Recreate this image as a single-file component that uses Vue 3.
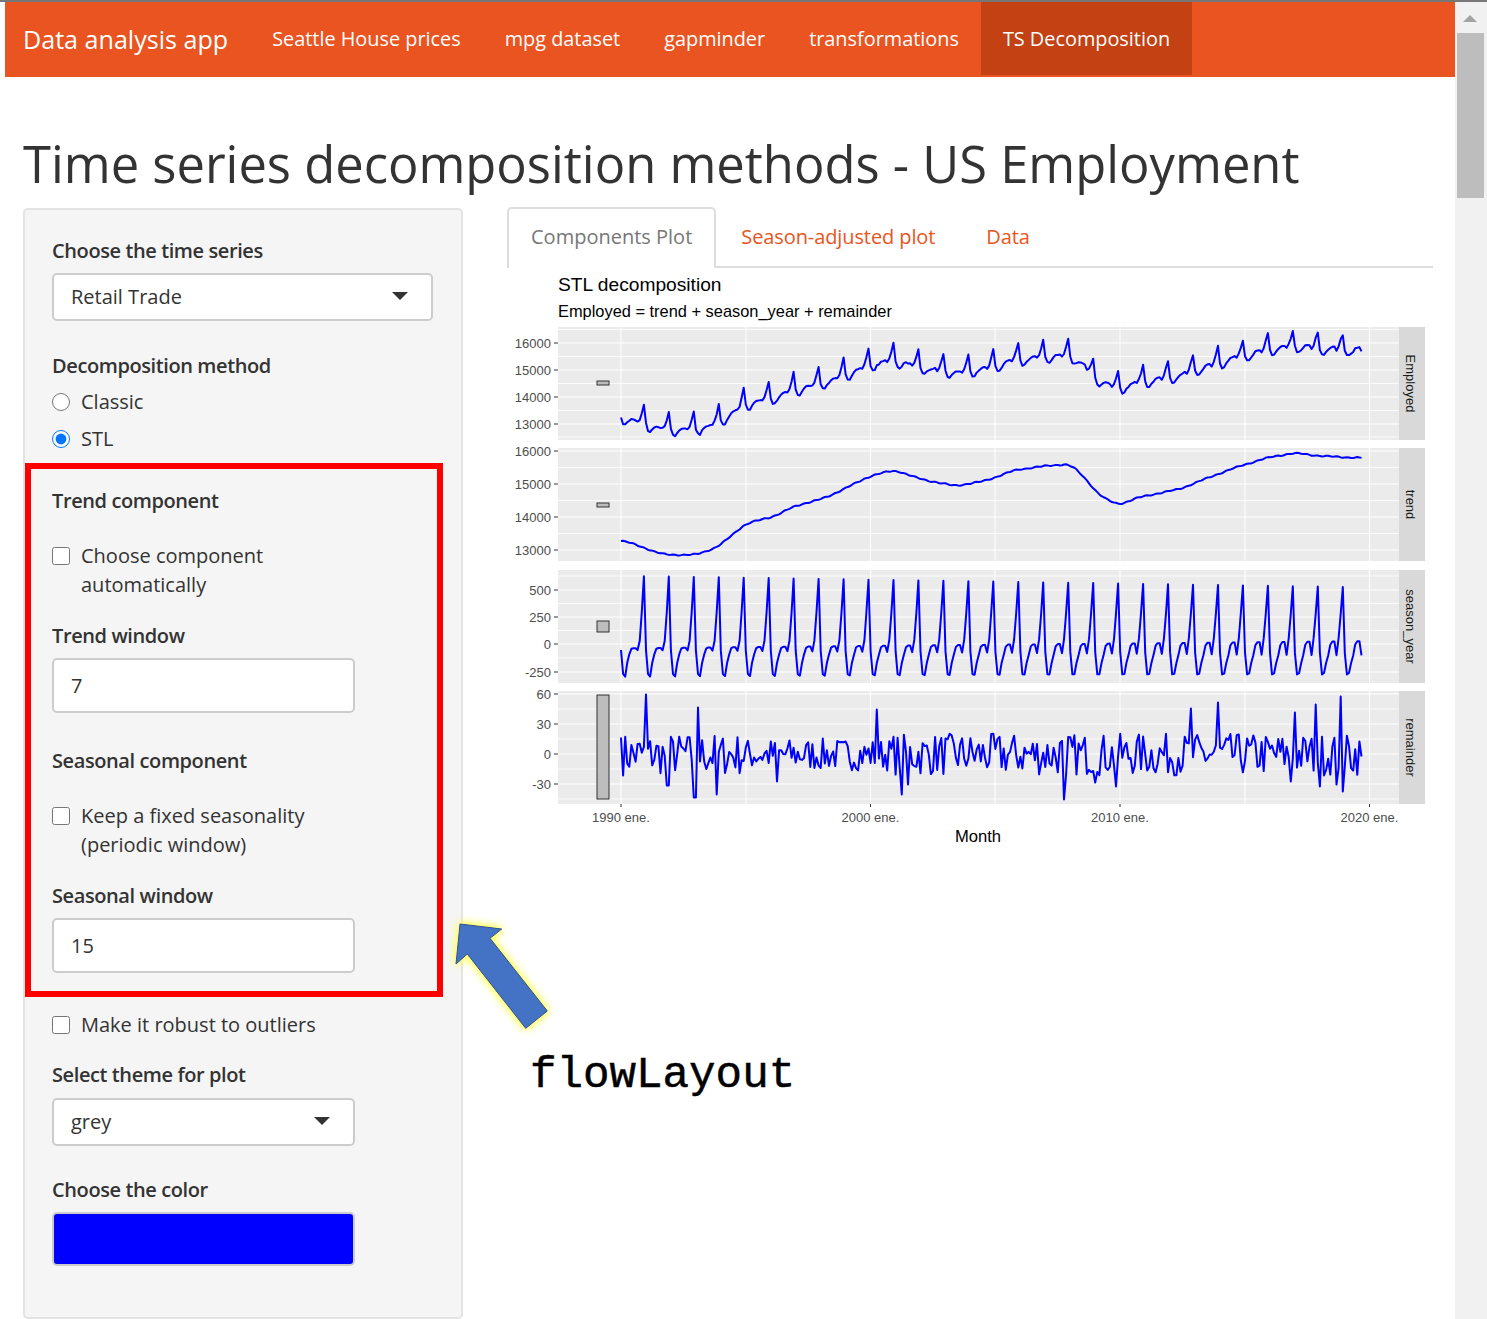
<script setup>
const navLinks = ['Seattle House prices', 'mpg dataset', 'gapminder', 'transformations', 'TS Decomposition']

// x position of a month index (0 = January 1990)
const monthX = (i) => 621 + i * 2.08

const trendKnots = [
  [621, 540], [640, 546], [660, 554], [680, 555], [695, 555], [718, 547], [745, 524], [775, 516],
  [795, 506], [825, 498], [850, 486], [870, 476], [895, 470], [920, 479], [955, 486], [985, 481],
  [1015, 470], [1045, 466], [1070, 464], [1085, 478], [1100, 496], [1118, 505], [1140, 497],
  [1180, 489], [1210, 477], [1240, 466], [1270, 457], [1295, 453], [1320, 456], [1361, 458]
]
function trendAt(x) {
  for (let k = 1; k < trendKnots.length; k++) {
    if (x <= trendKnots[k][0]) {
      const [x0, y0] = trendKnots[k - 1]
      const [x1, y1] = trendKnots[k]
      const y = y0 + ((y1 - y0) * (x - x0)) / (x1 - x0)
      return 13000 + (550 - y) / 0.033
    }
  }
  return 13000 + (550 - 458) / 0.033
}

const earlyYear = [-50, -270, -295, -170, -90, -40, -35, -35, -50, 30, 300, 630]
const lateYear = [-80, -275, -260, -170, -100, 0, 30, 30, -100, 60, 280, 525]

const spikes = {
  0: 17, 12: 60, 22: -31, 23: -31, 35: -43, 36: -43, 37: 47, 46: -40, 75: -27, 123: 45, 135: -40, 138: -30,
  213: -45, 214: -20, 228: -28, 238: -32, 274: 46, 287: 52, 322: -27, 324: 42, 334: 50, 336: -32, 344: -30,
  346: 58, 347: -37, 356: -2
}
let seed = 7
function rnd() {
  seed = (seed * 16807) % 2147483647
  return seed / 2147483647
}

const months = Array.from({ length: 357 }, (_, i) => i)
const rawTrend = months.map((i) => trendAt(monthX(i)))
const trend = months.map((i) => {
  const from = Math.max(0, i - 3)
  const to = Math.min(356, i + 3)
  let sum = 0
  for (let j = from; j <= to; j++) sum += rawTrend[j]
  return sum / (to - from + 1) + 14 * Math.sin(i * 1.3) + 10 * Math.sin(i * 0.41)
})
const season = months.map((i) => {
  const t = i / 356
  return earlyYear[i % 12] * (1 - t) + lateYear[i % 12] * t
})
const remainder = months.map((i) => {
  if (spikes[i] !== undefined) return spikes[i]
  const amp = i > 60 && i < 130 ? 16 : 21
  return (rnd() * 2 - 1) * amp
})
const employed = months.map((i) => trend[i] + season[i] + remainder[i])

const linePath = (values, toY) =>
  values.map((v, i) => `${i ? 'L' : 'M'}${monthX(i).toFixed(1)} ${toY(v).toFixed(1)}`).join('')

const panels = [
  {
    name: 'Employed', top: 327, bottom: 440, barTop: 381, barHeight: 4,
    majors: [[343, '16000'], [370, '15000'], [397, '14000'], [424, '13000']],
    minors: [329.5, 356.5, 383.5, 410.5, 437],
    path: linePath(employed, (v) => 424 - (v - 13000) * 0.027)
  },
  {
    name: 'trend', top: 448, bottom: 561, barTop: 503, barHeight: 4,
    majors: [[451, '16000'], [484, '15000'], [517, '14000'], [550, '13000']],
    minors: [467.5, 500.5, 533.5],
    path: linePath(trend, (v) => 550 - (v - 13000) * 0.033)
  },
  {
    name: 'season_year', top: 570, bottom: 683, barTop: 621, barHeight: 11,
    majors: [[590, '500'], [617, '250'], [644, '0'], [672, '-250']],
    minors: [576, 603.5, 630.5, 658],
    path: linePath(season, (v) => 644.5 - v * 0.109)
  },
  {
    name: 'remainder', top: 691, bottom: 804, barTop: 695, barHeight: 104,
    majors: [[694, '60'], [724, '30'], [754, '0'], [784, '-30']],
    minors: [709, 739, 769, 799],
    path: linePath(remainder, (v) => 754.5 - v)
  }
]
const gridX = [621, 746, 870.5, 995, 1120, 1245, 1369.5]
const yearTicks = [[621, '1990 ene.'], [870.5, '2000 ene.'], [1120, '2010 ene.'], [1369.5, '2020 ene.']]
</script>

<template>
  <div class="window">
    <div class="topline"></div>
    <div class="body-row">
      <div class="page">
        <nav class="navbar">
          <span class="brand">Data analysis app</span>
          <a
            v-for="(link, i) in navLinks"
            :key="link"
            class="nav-link"
            :class="{ active: i === navLinks.length - 1 }"
          >{{ link }}</a>
        </nav>

        <h1 class="title">Time series decomposition methods - US Employment</h1>

        <div class="columns">
          <aside class="sidebar">
            <label class="label first">Choose the time series</label>
            <div class="select wide"><span>Retail Trade</span><i class="caret"></i></div>

            <label class="label decomposition">Decomposition method</label>
            <label class="option classic"><input type="radio" name="method" /><span>Classic</span></label>
            <label class="option stl"><input type="radio" name="method" checked /><span>STL</span></label>

            <label class="label trend-head">Trend component</label>
            <label class="option check"><input type="checkbox" /><span>Choose component<br />automatically</span></label>
            <label class="label window-label">Trend window</label>
            <input class="number" type="text" value="7" readonly />

            <label class="label season-head">Seasonal component</label>
            <label class="option check"><input type="checkbox" /><span>Keep a fixed seasonality<br />(periodic window)</span></label>
            <label class="label window-label">Seasonal window</label>
            <input class="number" type="text" value="15" readonly />

            <label class="option robust"><input type="checkbox" /><span>Make it robust to outliers</span></label>

            <label class="label theme">Select theme for plot</label>
            <div class="select"><span>grey</span><i class="caret"></i></div>

            <label class="label color">Choose the color</label>
            <div class="swatch"></div>
          </aside>

          <main class="content">
            <div class="tabs">
              <a class="tab active">Components Plot</a>
              <a class="tab">Season-adjusted plot</a>
              <a class="tab">Data</a>
            </div>
            <svg class="plot" viewBox="507 268 926 590" width="926" height="590">
              <text x="558" y="291" class="plot-title">STL decomposition</text>
              <text x="558" y="317" class="plot-sub">Employed = trend + season_year + remainder</text>
              <g v-for="p in panels" :key="p.name">
                <rect x="558" :y="p.top" width="841" :height="p.bottom - p.top" fill="#ebebeb" />
                <rect x="1399" :y="p.top" width="26" :height="p.bottom - p.top" fill="#d9d9d9" />
                <line v-for="y in p.minors" :key="y" x1="558" x2="1399" :y1="y" :y2="y" stroke="#fff" stroke-width="0.8" />
                <line v-for="t in p.majors" :key="t[1]" x1="558" x2="1399" :y1="t[0]" :y2="t[0]" stroke="#fff" stroke-width="1.2" />
                <line v-for="x in gridX" :key="x" :x1="x" :x2="x" :y1="p.top" :y2="p.bottom" stroke="#fff" stroke-width="1" />
                <rect x="597" :y="p.barTop" width="12" :height="p.barHeight" fill="#bdbdbd" stroke="#333" stroke-width="1" />
                <path :d="p.path" fill="none" stroke="#0000ff" stroke-width="2" stroke-linejoin="round" />
                <g v-for="t in p.majors" :key="t[1]">
                  <line x1="554" x2="558" :y1="t[0]" :y2="t[0]" stroke="#333" />
                  <text x="551" :y="t[0] + 4.5" class="axis" text-anchor="end">{{ t[1] }}</text>
                </g>
                <text
                  class="strip"
                  text-anchor="middle"
                  :transform="`translate(1406 ${(p.top + p.bottom) / 2}) rotate(90)`"
                >{{ p.name }}</text>
              </g>
              <g v-for="t in yearTicks" :key="t[1]">
                <line :x1="t[0]" :x2="t[0]" y1="804" y2="807" stroke="#333" />
                <text :x="t[0]" y="822" class="axis" text-anchor="middle">{{ t[1] }}</text>
              </g>
              <text x="978" y="842" class="plot-month" text-anchor="middle">Month</text>
            </svg>
          </main>
        </div>
      </div>

      <div class="scrollbar">
        <i class="scroll-arrow"></i>
        <div class="scroll-thumb"></div>
      </div>
    </div>

    <!-- annotation layer drawn on top of the screenshot -->
    <div class="red-box"></div>
    <svg class="arrow" width="110" height="120" viewBox="445 915 110 120">
      <polygon
        points="460,924 501.7,929 490,938.3 547.3,1011 525.7,1028.3 467.3,954 456,964"
        fill="#4472c4"
        stroke="#2f528f"
        stroke-width="1"
      />
    </svg>
    <div class="flow-label">flowLayout</div>
  </div>
</template>

<style>
html, body { margin: 0; background: #fff; }
</style>

<style scoped>
.window {
  position: relative;
  width: 1487px;
  height: 1319px;
  overflow: hidden;
  background: #fff;
  font-family: "Open Sans", "Noto Sans", sans-serif;
  color: #333;
}
.topline { height: 2px; background: #777; }
.body-row { display: flex; height: 1317px; padding-left: 5px; }
.page { width: 1450px; flex: none; }

.navbar {
  display: flex;
  align-items: stretch;
  height: 73px;
  background: #e95420;
  border-bottom: 2px solid #e95420;
  box-sizing: content-box;
  color: #fff;
}
.brand {
  font-size: 25.1px;
  line-height: 74px;
  margin-left: 18px;
  margin-right: 22px;
  white-space: nowrap;
}
.nav-link {
  padding: 0 22px;
  font-size: 19.87px;
  line-height: 74px;
  white-space: nowrap;
}
.nav-link.active { background: #c34113; }

.title {
  margin: 57px 0 14px 18px;
  font-size: 50.7px;
  line-height: 60px;
  font-weight: 400;
  white-space: nowrap;
}

.columns { display: flex; align-items: flex-start; padding-left: 18px; }

.sidebar {
  box-sizing: border-box;
  width: 440px;
  height: 1111px;
  flex: none;
  background: #f5f5f5;
  border: 2px solid #e3e3e3;
  border-radius: 5px;
  padding: 27px 27px 0;
  display: flex;
  flex-direction: column;
  align-items: flex-start;
  font-size: 20px;
  line-height: 29px;
}
.label { display: block; font-weight: 600; letter-spacing: -0.4px; white-space: nowrap; height: 29px; line-height: 27px; }
.first { margin-bottom: 7px; }
.decomposition { margin-top: 31px; margin-bottom: 7px; }
.trend-head { margin-top: 33px; margin-bottom: 26px; }
.window-label { margin-top: 22px; margin-bottom: 7px; }
.season-head { margin-top: 34px; margin-bottom: 26px; }
.theme { margin-top: 21px; margin-bottom: 8px; }
.color { margin-top: 30px; margin-bottom: 7px; }

.option { display: flex; align-items: flex-start; white-space: nowrap; }
.option input { width: 18px; height: 18px; margin: 5px 11px 0 0; flex: none; }
.option span { margin: -1px 0 1px; }
.stl { margin-top: 8px; }
.robust { margin-top: 38px; }

.select {
  box-sizing: border-box;
  position: relative;
  width: 303px;
  height: 48px;
  background: #fff;
  border: 2px solid #ccc;
  border-radius: 5px;
  padding-left: 17px;
  line-height: 44px;
}
.select.wide { width: 381px; }
.caret {
  position: absolute;
  right: 23px;
  top: 17px;
  border-left: 8px solid transparent;
  border-right: 8px solid transparent;
  border-top: 8px solid #333;
}
.number {
  box-sizing: border-box;
  width: 303px;
  height: 55px;
  background: #fff;
  border: 2px solid #ccc;
  border-radius: 5px;
  padding: 0 17px;
  font: inherit;
  color: #333;
  outline: none;
}
.swatch {
  box-sizing: border-box;
  width: 303px;
  height: 54px;
  background: #0000ff;
  border: 2px solid #ccc;
  border-radius: 5px;
}

.content { margin-left: 44px; width: 926px; flex: none; margin-top: -1px; }
.tabs {
  display: flex;
  height: 59px;
  border-bottom: 2px solid #ddd;
  font-size: 20px;
  color: #e95420;
}
.tab { padding: 0 22px 0 24px; line-height: 60px; white-space: nowrap; margin-right: 5px; letter-spacing: -0.1px; }
.tab.active {
  box-sizing: border-box;
  height: 61px;
  margin-right: 1px;
  letter-spacing: 0;
  color: #777;
  background: #fff;
  border: 2px solid #ddd;
  border-bottom: 0;
  border-radius: 5px 5px 0 0;
  padding: 0 22px;
  line-height: 56px;
}
.plot { display: block; }
.plot-title { font: 19.2px "Liberation Sans", sans-serif; fill: #000; }
.plot-sub { font: 16.4px "Liberation Sans", sans-serif; fill: #000; }
.plot-month { font: 16.6px "Liberation Sans", sans-serif; fill: #000; }
.axis { font: 13px "Liberation Sans", sans-serif; fill: #4d4d4d; }
.strip { font: 13px "Liberation Sans", sans-serif; fill: #1a1a1a; }

.scrollbar { flex: none; width: 32px; height: 1317px; background: #f1f1f1; position: relative; }
.scroll-arrow {
  display: block;
  width: 0;
  margin: 13px 0 0 8px;
  border-left: 7.5px solid transparent;
  border-right: 7.5px solid transparent;
  border-bottom: 7px solid #a3a3a3;
}
.scroll-thumb { margin: 11px 0 0 2px; width: 27px; height: 165px; background: #bdbdbd; }

.red-box {
  position: absolute;
  left: 25px;
  top: 463px;
  width: 418px;
  height: 534px;
  box-sizing: border-box;
  border: 6px solid #ff0000;
}
.arrow {
  position: absolute;
  left: 445px;
  top: 915px;
  overflow: visible;
  filter: drop-shadow(0 0 4px #ffff66) drop-shadow(0 0 2px #ffff66);
}
.flow-label {
  position: absolute;
  left: 530px;
  top: 1050px;
  font: 44.2px/50px "Liberation Mono", monospace;
  color: #000;
  -webkit-text-stroke: 0.5px #000;
  white-space: nowrap;
}
</style>
